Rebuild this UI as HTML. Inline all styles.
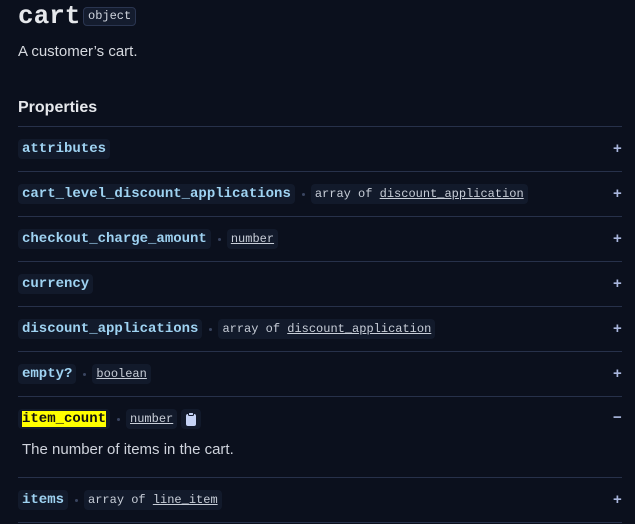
<!DOCTYPE html>
<html><head><meta charset="utf-8"><style>
body{margin:0;background:#0b101d;width:635px;height:524px;overflow:hidden;position:relative;font-family:"Liberation Sans",sans-serif;}
.t{position:absolute;left:18px;top:1px;font:bold 26px/30px "Liberation Mono",monospace;color:#e6e8ec;}
.obj{position:absolute;left:83px;top:7px;height:17px;padding:0 4px;border:1px solid #2a3550;background:#141c2e;border-radius:4px;font:12px/17px "Liberation Mono",monospace;color:#d0d5de;}
.d{position:absolute;left:18px;top:43px;font-size:15px;color:#d6d9df;}
.h{position:absolute;left:18px;top:99px;font-weight:bold;font-size:16px;color:#e6e8ec;}
.ln{position:absolute;left:18px;width:604px;height:1px;background:#27314a;}
.row{position:absolute;left:18px;height:20px;display:flex;align-items:center;}
.n{background:#121a2b;border-radius:4px;padding:0 4px;height:20px;font:bold 14px/20px "Liberation Mono",monospace;color:#9fd3f2;}
.dot{width:3px;height:3px;border-radius:2px;background:#3a4560;margin:0 6px 0 7px;}
.ty{background:#121a2b;border-radius:4px;padding:0 4px;height:20px;font:12px/20px "Liberation Mono",monospace;color:#c8ced8;}
.ty u{text-decoration:underline;}
.p{position:absolute;left:613px;font:bold 15px/20px "Liberation Sans",sans-serif;color:#a9b6dd;}
.hl{background:#ffff00;color:#111;}
</style></head><body>
<div class="t">cart</div><div class="obj">object</div>
<div class="d">A customer’s cart.</div>
<div class="h">Properties</div>
<div class="ln" style="top:126px"></div>
<div class="row" style="top:139px"><span class="n">attributes</span></div><div class="p" style="top:139px">+</div>
<div class="ln" style="top:171px"></div>
<div class="row" style="top:184px"><span class="n">cart_level_discount_applications</span><span class="dot"></span><span class="ty">array of <u>discount_application</u></span></div><div class="p" style="top:184px">+</div>
<div class="ln" style="top:216px"></div>
<div class="row" style="top:229px"><span class="n">checkout_charge_amount</span><span class="dot"></span><span class="ty"><u>number</u></span></div><div class="p" style="top:229px">+</div>
<div class="ln" style="top:261px"></div>
<div class="row" style="top:274px"><span class="n">currency</span></div><div class="p" style="top:274px">+</div>
<div class="ln" style="top:306px"></div>
<div class="row" style="top:319px"><span class="n">discount_applications</span><span class="dot"></span><span class="ty">array of <u>discount_application</u></span></div><div class="p" style="top:319px">+</div>
<div class="ln" style="top:351px"></div>
<div class="row" style="top:364px"><span class="n">empty?</span><span class="dot"></span><span class="ty"><u>boolean</u></span></div><div class="p" style="top:364px">+</div>
<div class="ln" style="top:396px"></div>
<div class="row" style="top:409px"><span class="n"><span class="hl">item_count</span></span><span class="dot"></span><span class="ty"><u>number</u></span><span class="ty" style="margin-left:4px;padding:0 4px;display:flex;align-items:center"><svg width="12" height="14" viewBox="0 0 12 14"><rect x="1" y="2" width="10" height="12" rx="2" fill="#c5d3f5"/><rect x="3.5" y="0.5" width="5" height="3" rx="1" fill="#c5d3f5" stroke="#121a2b" stroke-width="1"/></svg></span></div><div class="p" style="top:408px">−</div>
<div style="position:absolute;left:22px;top:441px;font-size:15px;color:#cfd3dc;">The number of items in the cart.</div>
<div class="ln" style="top:477px"></div>
<div class="row" style="top:490px"><span class="n">items</span><span class="dot"></span><span class="ty">array of <u>line_item</u></span></div><div class="p" style="top:490px">+</div>
<div class="ln" style="top:522px"></div>
</body></html>
